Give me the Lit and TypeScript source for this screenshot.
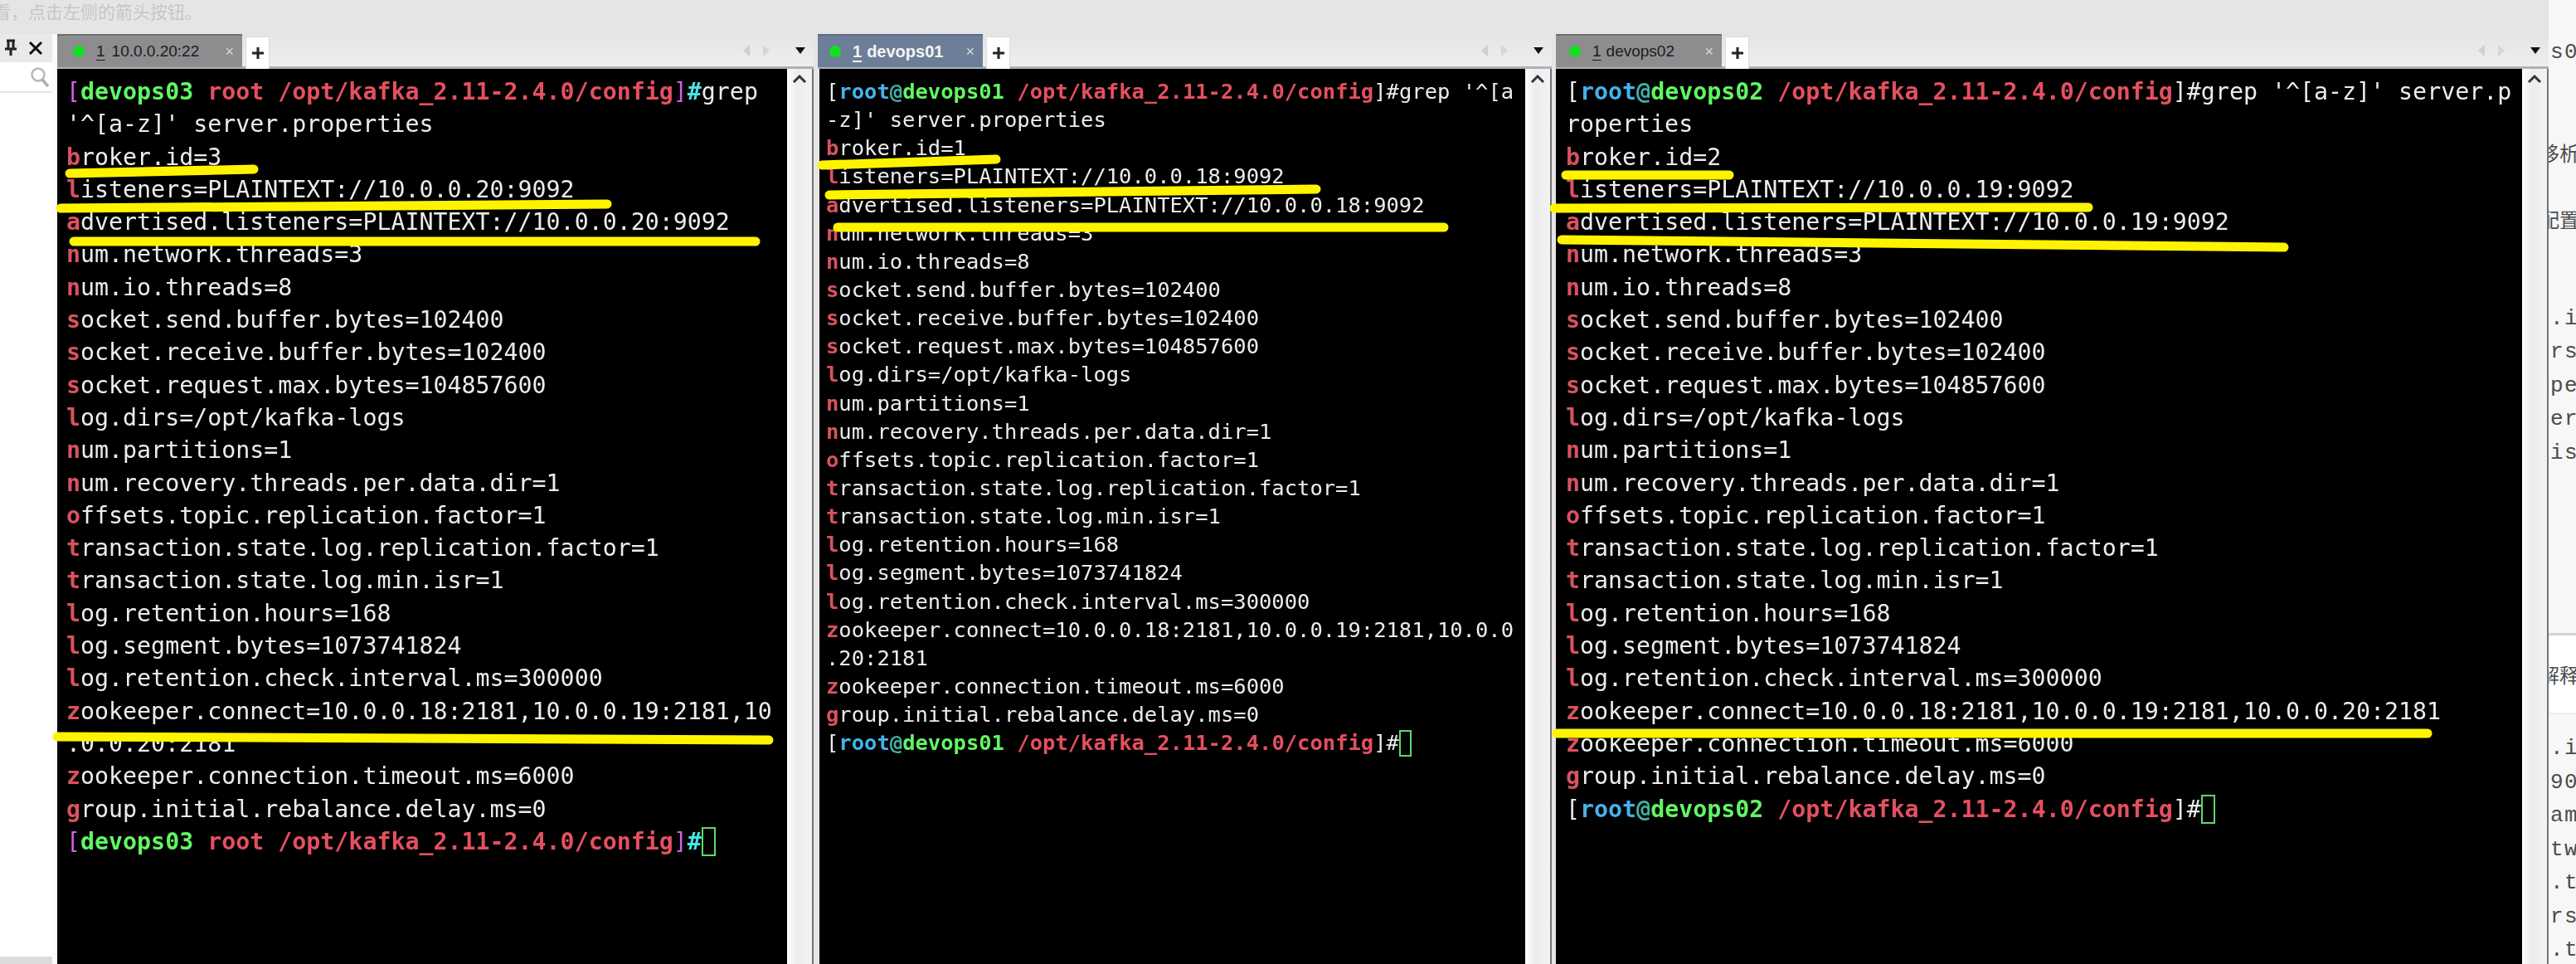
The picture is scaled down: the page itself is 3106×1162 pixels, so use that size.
import { LitElement, html, css, svg } from "lit";
import { customElement } from "lit/decorators.js";

const cfg = (id: number, ip: string, zk: string[]) => [
  `broker.id=${id}`,
  `listeners=PLAINTEXT://${ip}:9092`,
  `advertised.listeners=PLAINTEXT://${ip}:9092`,
  "num.network.threads=3",
  "num.io.threads=8",
  "socket.send.buffer.bytes=102400",
  "socket.receive.buffer.bytes=102400",
  "socket.request.max.bytes=104857600",
  "log.dirs=/opt/kafka-logs",
  "num.partitions=1",
  "num.recovery.threads.per.data.dir=1",
  "offsets.topic.replication.factor=1",
  "transaction.state.log.replication.factor=1",
  "transaction.state.log.min.isr=1",
  "log.retention.hours=168",
  "log.segment.bytes=1073741824",
  "log.retention.check.interval.ms=300000",
  ...zk,
  "zookeeper.connection.timeout.ms=6000",
  "group.initial.rebalance.delay.ms=0",
];

const promptA = html`<span class="mg">[</span><b class="gn">devops03</b><b class="rd"> root /opt/kafka_2.11-2.4.0/config</b><span class="mg">]</span><b class="cy">#</b>`;
const promptB = (n: string) => html`<span>[</span><b class="bl">root</b><b class="tl">@</b><b class="gn">devops${n}</b><b class="rd"> /opt/kafka_2.11-2.4.0/config</b><span>]#</span>`;

const panes = [
  {
    cls: "p1", tab: "10.0.0.20:22", prompt: promptA,
    head: ["grep", "'^[a-z]' server.properties"],
    body: cfg(3, "10.0.0.20", ["zookeeper.connect=10.0.0.18:2181,10.0.0.19:2181,10", "\u0000.0.0.20:2181"]),
  },
  {
    cls: "p2", tab: "devops01", prompt: promptB("01"),
    head: ["grep '^[a", "-z]' server.properties"],
    body: cfg(1, "10.0.0.18", ["zookeeper.connect=10.0.0.18:2181,10.0.0.19:2181,10.0.0", "\u0000.20:2181"]),
  },
  {
    cls: "p3", tab: "devops02", prompt: promptB("02"),
    head: ["grep '^[a-z]' server.p", "roperties"],
    body: cfg(2, "10.0.0.19", ["zookeeper.connect=10.0.0.18:2181,10.0.0.19:2181,10.0.0.20:2181"]),
  },
];

const marks: number[][] = [
  [84, 209, 306, 204], [73, 251, 732, 246], [89, 291, 911, 291], [69, 888, 927, 892],
  [991, 199, 1201, 192], [1000, 235, 1587, 228], [1010, 274, 1741, 274],
  [1888, 211, 2085, 211], [1874, 251, 2518, 250], [1883, 289, 2754, 298], [1877, 884, 2927, 884],
];

@customElement("app-root")
export class AppRoot extends LitElement {
  static styles = css`
    :host { display: block; position: relative; width: 3106px; height: 1162px; overflow: hidden; background: #e6e4e4; font-family: "Liberation Sans", sans-serif; }
    .top { height: 41px; overflow: hidden; }
    .hint { margin-left: -8px; font: 21px/27px "Noto Sans CJK SC", sans-serif; color: #c6c6c6; filter: blur(0.7px); white-space: nowrap; }
    .main { display: flex; height: 1121px; }
    .side { width: 69px; flex: none; display: flex; flex-direction: column; background: #fbfbfb; }
    .sidehead { height: 34px; background: #e9e9e9; display: flex; align-items: center; gap: 11px; padding-left: 3px; margin-right: 6px; box-sizing: border-box; }
    .search { height: 35px; background: #fff; border-bottom: 2px solid #e4e4e4; display: flex; align-items: center; justify-content: flex-end; padding-right: 3px; margin-right: 6px; }
    .sidespace { flex: 1; margin-right: 6px; background: #fff; }
    .sidefoot { height: 9px; background: #dcdcdc; margin-right: 6px; }
    .pane { flex: none; display: flex; flex-direction: column; background: #efefef; }
    .p1 { width: 912px; margin-right: 5px; }
    .p2 { width: 885px; margin-right: 5px; }
    .p3 { width: 1197px; }
    .bar { flex: none; display: flex; align-items: stretch; background: linear-gradient(#e6e4e4, #efeeee); border-bottom: 3px solid #a9b3ba; height: 39px; }
    .tab { flex: none; margin-bottom: -1px; display: flex; align-items: center; background: #8d8d8f; border-top: 2px solid #6f6f72; box-sizing: border-box; color: #1c1c1c; }
    .p1 .tab { width: 223px; padding-left: 19px; font-size: 19px; }
    .p2 .tab { width: 199px; padding-left: 14px; background: #6d7e98; border-top-color: #5c6c84; color: #f4f4f4; font-size: 20px; font-weight: bold; }
    .p3 .tab { width: 200px; padding-left: 16px; font-size: 19px; }
    .dot { width: 14px; height: 14px; border-radius: 50%; background: #10e020; flex: none; margin-right: 14px; }
    .num { text-decoration: underline; text-underline-offset: 4px; margin-right: 6px; }
    .p1 .num { margin-right: 8px; }
    .x { margin-left: auto; margin-right: 10px; color: #d8d8d8; font-size: 18px; font-weight: normal; }
    .plus { flex: none; width: 29px; margin: 3px 0 -3px 4px; background: #fff; border: 1px solid #dcdcdc; border-bottom: 0; box-sizing: border-box; display: flex; align-items: center; justify-content: center; }
    .arrows { margin-left: auto; display: flex; align-items: center; padding-right: 9px; }
    .arrow { margin-right: 12px; }
    .caret { margin-left: 16px; }
    .body { flex: 1; display: flex; min-height: 0; border-right: 2px solid #6f7478; }
    .p2 .body { padding-left: 2px; background: #e9e9e9; }
    .term { flex: 1; background: #000; color: #ececec; overflow: hidden; font: 28.28px/39.3px "DejaVu Sans Mono", monospace; }
    .p1 .term { padding: 8px 0 0 11px; }
    .p3 .term { padding: 8px 0 0 12px; }
    .p2 .term { font-size: 25.5px; line-height: 34.15px; padding: 10px 0 0 8px; }
    .lines { filter: blur(0.3px); }
    .ln { white-space: pre; height: 39.3px; }
    .p2 .ln { height: 34.15px; }
    .ln b { font-weight: bold; }
    .mg { color: #d65fe6; }
    .gn { color: #62f563; }
    .rd { color: #e4505f; }
    .cy { color: #4be3e6; }
    .bl { color: #45b2ec; }
    .tl { color: #3fb2a6; }
    .first { color: #d9525f; font-weight: bold; }
    .cursor { display: inline-block; box-sizing: border-box; width: 1ch; height: 1.25em; vertical-align: -0.3em; border: 2px solid #5fd86f; }
    .scroll { flex: none; width: 30px; background: linear-gradient(90deg, #ffffff, #ececec 40%, #f3f3f3); display: flex; justify-content: center; padding-top: 6px; box-sizing: border-box; }
    .right { flex: 1; margin-top: -41px; height: 1162px; background: #f7f7f7; overflow: hidden; color: #4c4c4c; display: flex; flex-direction: column; font: 26px/40.5px "Liberation Mono", monospace; letter-spacing: 1.5px; }
    .rt { padding-left: 2px; white-space: nowrap; height: 40.5px; flex: none; }
    .rt.cjk { font: 24px/40px "Noto Sans CJK SC", sans-serif; letter-spacing: 0; margin-left: -13px; height: 40px; }
    .s1 { height: 43px; flex: none; }
    .s2 { height: 80px; flex: none; }
    .s3 { height: 40px; flex: none; }
    .s4 { height: 80px; flex: none; }
    .s5 { height: 197px; flex: none; }
    .s6 { height: 21px; flex: none; }
    .band { flex: none; height: 98px; background: #fff; border-top: 3px solid #d4d4d4; border-bottom: 2px solid #ececec; box-sizing: border-box; padding-top: 27px; }
    .overlay { position: absolute; left: 0; top: 0; pointer-events: none; }
  `;

  private tabBar(p: (typeof panes)[number]) {
    return html`<div class="bar">
      <div class="tab"><span class="dot"></span><span class="num">1</span><span>${p.tab}</span><span class="x">×</span></div>
      <div class="plus"><svg width="18" height="18" viewBox="0 0 18 18"><path d="M9 2v14M2 9h14" stroke="#222" stroke-width="3"/></svg></div>
      <div class="arrows">
        <svg class="arrow" width="12" height="18" viewBox="0 0 12 18"><path d="M10 2v14L2 9z" fill="#cfcfcf"/></svg>
        <svg class="arrow" width="12" height="18" viewBox="0 0 12 18"><path d="M2 2v14l8-7z" fill="#d6d6d6"/></svg>
        <svg class="caret" width="14" height="10" viewBox="0 0 14 10"><path d="M1 1h12L7 9z" fill="#111"/></svg>
      </div>
    </div>`;
  }

  private line(s: string) {
    if (s.startsWith("\u0000")) return html`<div class="ln">${s.slice(1)}</div>`;
    return html`<div class="ln"><span class="first">${s[0]}</span>${s.slice(1)}</div>`;
  }

  private pane(p: (typeof panes)[number]) {
    return html`<section class="pane ${p.cls}">
      ${this.tabBar(p)}
      <div class="body">
        <div class="term"><div class="lines">
          <div class="ln">${p.prompt}${p.head[0]}</div>
          <div class="ln">${p.head[1]}</div>
          ${p.body.map((s) => this.line(s))}
          <div class="ln">${p.prompt}<span class="cursor"></span></div>
        </div></div>
        <div class="scroll"><svg width="18" height="12" viewBox="0 0 18 12"><path d="M2 10l7-7 7 7" fill="none" stroke="#333" stroke-width="3"/></svg></div>
      </div>
    </section>`;
  }

  render() {
    return html`
      <div class="top"><div class="hint">看，点击左侧的箭头按钮。</div></div>
      <div class="main">
        <aside class="side">
          <div class="sidehead">
            <svg width="20" height="22" viewBox="0 0 20 22"><path d="M5 2h10M7 2v9M13 2v9M3 12h14M10 12v8" stroke="#222" stroke-width="3" fill="none"/></svg>
            <svg width="18" height="18" viewBox="0 0 18 18"><path d="M2 2l14 14M16 2L2 16" stroke="#111" stroke-width="3"/></svg>
          </div>
          <div class="search"><svg width="24" height="26" viewBox="0 0 24 26"><circle cx="10" cy="10" r="7.5" fill="none" stroke="#b8b8b8" stroke-width="2.5"/><path d="M15 16l7 8" stroke="#b0b0b0" stroke-width="3.5"/></svg></div>
          <div class="sidespace"></div>
          <div class="sidefoot"></div>
        </aside>
        ${panes.map((p) => this.pane(p))}
        <aside class="right">
          <div class="s1"></div>
          <div class="rt">s0:</div>
          <div class="s2"></div>
          <div class="rt cjk">移析</div>
          <div class="s3"></div>
          <div class="rt cjk">配置</div>
          <div class="s4"></div>
          <div class="rt">.id</div><div class="rt">rs=</div><div class="rt">per</div><div class="rt">er=</div><div class="rt">iso</div>
          <div class="s5"></div>
          <div class="band"><div class="rt cjk">解释</div></div>
          <div class="s6"></div>
          <div class="rt">.id</div><div class="rt">909</div><div class="rt">ame</div><div class="rt">two</div><div class="rt">.th</div><div class="rt">rs=</div><div class="rt">.tr</div>
        </aside>
      </div>
      <svg class="overlay" width="3106" height="1162" viewBox="0 0 3106 1162">
        ${marks.map((m) => svg`<line x1=${m[0]} y1=${m[1]} x2=${m[2]} y2=${m[3]} stroke="#fff400" stroke-width="11" stroke-linecap="round"/>`)}
      </svg>
    `;
  }
}
